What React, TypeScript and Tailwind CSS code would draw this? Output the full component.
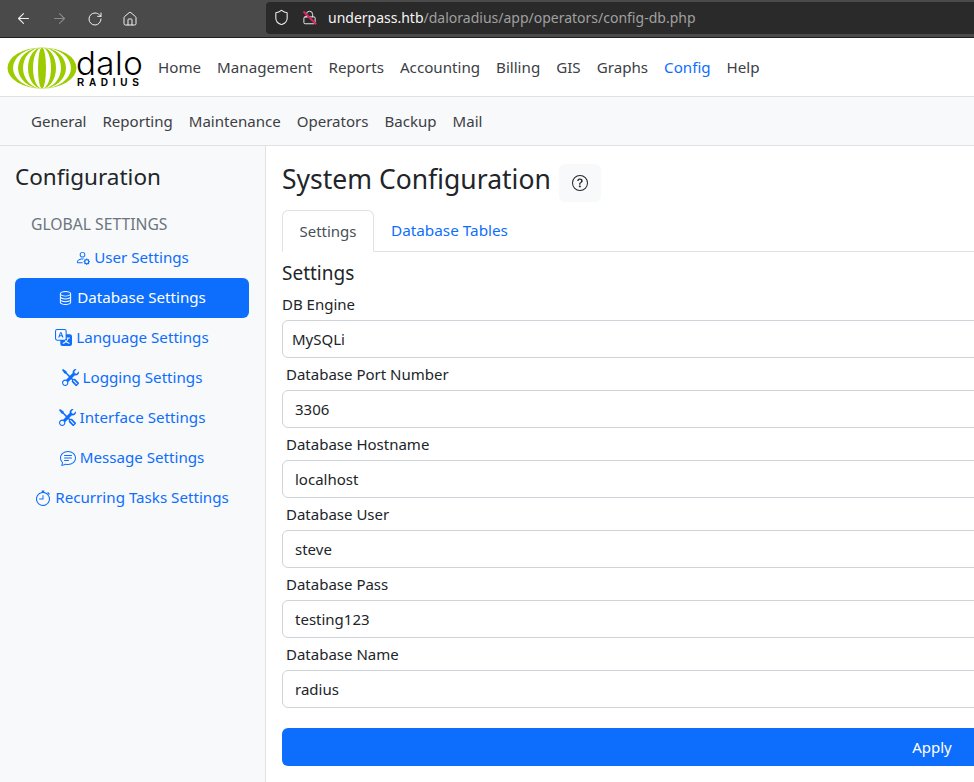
import React from 'react';
import { ArrowLeft, ArrowRight, RotateCw, House, Shield, Lock } from 'lucide-react';
import { BsPersonGear, BsDatabase, BsTranslate, BsTools, BsChatText, BsStopwatch, BsQuestionCircle } from 'react-icons/bs';

const navItems = ['Home', 'Management', 'Reports', 'Accounting', 'Billing', 'GIS', 'Graphs', 'Config', 'Help'];
const subItems = ['General', 'Reporting', 'Maintenance', 'Operators', 'Backup', 'Mail'];

const sideItems = [
  { label: 'User Settings', icon: BsPersonGear, size: 15 },
  { label: 'Database Settings', icon: BsDatabase, size: 15, active: true },
  { label: 'Language Settings', icon: BsTranslate, size: 17 },
  { label: 'Logging Settings', icon: BsTools, size: 17 },
  { label: 'Interface Settings', icon: BsTools, size: 17 },
  { label: 'Message Settings', icon: BsChatText, size: 16 },
  { label: 'Recurring Tasks Settings', icon: BsStopwatch, size: 16 },
];

const fields = [
  { label: 'Database Port Number', value: '3306' },
  { label: 'Database Hostname', value: 'localhost' },
  { label: 'Database User', value: 'steve' },
  { label: 'Database Pass', value: 'testing123' },
  { label: 'Database Name', value: 'radius' },
];

// white tapered meridians of the globe, given as inner and outer radius
const stripes = [
  [4, 9],
  [14, 19],
  [24, 29],
];

const Logo = () => (
  <div className="relative w-[136px] h-[44px] shrink-0">
    <svg width="70" height="42" viewBox="0 0 70 42" className="absolute left-0 top-[2px]">
      <ellipse cx="35" cy="21" rx="34.5" ry="20.5" fill="#9ccc00" />
      {stripes.map(([a, b]) => (
        <g key={a} fill="#ffffff">
          <path d={`M35 .5A${b} 20.5 0 0 1 35 41.5A${a} 20.5 0 0 0 35 .5Z`} />
          <path d={`M35 .5A${b} 20.5 0 0 0 35 41.5A${a} 20.5 0 0 1 35 .5Z`} />
        </g>
      ))}
    </svg>
    <span className="absolute left-[69px] top-[6px] text-[33px] leading-[24px] font-light tracking-[0.5px] text-black font-['Inter',sans-serif]">dalo</span>
    <span className="absolute left-[70px] top-[33px] text-[10px] leading-[10px] font-bold tracking-[4.7px] text-black font-['Liberation_Sans',sans-serif]">RADIUS</span>
  </div>
);

export default function App() {
  return (
    <div className="w-[974px] h-[782px] overflow-hidden flex flex-col bg-white text-[#212529] font-['Noto_Sans',sans-serif]">
      {/* Browser toolbar */}
      <div className="h-[38px] shrink-0 bg-[#4a4a4a] border-b border-[#1f1f1f] flex items-center pl-[15px]">
        <ArrowLeft size={17} strokeWidth={1.5} className="text-[#f0f0f0]" />
        <ArrowRight size={17} strokeWidth={1.5} className="text-[#8a8a8a] ml-[19px]" />
        <RotateCw size={16} strokeWidth={1.5} className="text-[#f0f0f0] ml-[19px]" />
        <House size={16} strokeWidth={1.5} className="text-[#f0f0f0] ml-[19px]" />
        <div className="ml-[128px] h-[32px] flex-1 bg-[#2a2a2a] rounded-l-[4px] flex items-center pl-[7px] mb-[2px]">
          <Shield size={17} strokeWidth={1.5} className="text-[#f0f0f0]" />
          <div className="relative ml-[12px] mr-[11px]">
            <Lock size={15} strokeWidth={1.5} className="text-[#f0f0f0]" />
            <div className="absolute left-[-1px] top-[7px] w-[18px] h-[1.5px] bg-[#e0245e] rotate-45" />
          </div>
          <span className="text-[14px] text-[#f5f5f5]">underpass.htb<span className="text-[#a0a0a0]">/daloradius/app/operators/config-db.php</span></span>
        </div>
      </div>

      {/* Main nav */}
      <nav className="h-[59px] shrink-0 bg-white border-b border-[#dee2e6] flex items-center pl-[7px]">
        <Logo />
        <div className="flex gap-[16px] ml-[15px] pt-[1px]">
          {navItems.map((item) => (
            <a key={item} className={`text-[15.15px] ${item === 'Config' ? 'text-[#0d6efd]' : 'text-[#3c4045]'}`}>{item}</a>
          ))}
        </div>
      </nav>

      {/* Sub nav */}
      <div className="h-[49px] shrink-0 bg-[#f8f9fa] border-b border-[#dee2e6] flex items-center gap-[16px] pl-[31px]">
        {subItems.map((item) => (
          <a key={item} className="text-[15.05px] text-[#3c4045]">{item}</a>
        ))}
      </div>

      <div className="flex flex-1 min-h-0">
        {/* Sidebar */}
        <aside className="w-[266px] shrink-0 bg-[#f8f9fa] border-r border-[#dee2e6] pl-[15px] pr-[16px] pt-[15px]">
          <h4 className="text-[22.5px] leading-[32px]">Configuration</h4>
          <div className="pl-[16px] mt-[19px] text-[15.7px] leading-[24px] text-[#6c757d]">GLOBAL SETTINGS</div>
          <ul className="mt-[2px]">
            {sideItems.map(({ label, icon: Icon, active, size }) => (
              <li key={label}>
                <a className={`h-[40px] pb-[1px] rounded-[6px] flex items-center justify-center gap-[4px] text-[15.15px] ${active ? 'bg-[#0d6efd] text-white' : 'text-[#0d6efd]'}`}>
                  <Icon size={size} />
                  {label}
                </a>
              </li>
            ))}
          </ul>
        </aside>

        {/* Content */}
        <main className="flex-1 min-w-0 pl-[16px] overflow-hidden">
          <div className="w-[1300px]">
            <div className="flex items-start mt-[16px]">
              <h1 className="text-[26.5px] leading-[34px]">System Configuration</h1>
              <div className="ml-[8px] mt-[2px] w-[42px] h-[38px] bg-[#f8f9fa] rounded-[6px] flex items-center justify-center">
                <BsQuestionCircle size={16} className="text-[#212529]" />
              </div>
            </div>
            <div className="flex border-b border-[#dee2e6] mt-[8px] h-[42px]">
              <div className="h-[42px] w-[92px] flex items-center justify-center border border-[#dee2e6] border-b-white rounded-t-[6px] bg-white text-[15px] text-[#495057]">Settings</div>
              <div className="h-[41px] px-[17px] flex items-center text-[15.3px] text-[#0d6efd]">Database Tables</div>
            </div>
            <h5 className="text-[19px] leading-[24px] mt-[9px]">Settings</h5>
            <label className="block text-[15px] leading-[22px] mt-[8px] mb-[5px]">DB Engine</label>
            <div className="h-[38px] border border-[#ced4da] rounded-[6px] flex items-center pl-[9px] text-[15px]">MySQLi</div>
            {fields.map((field) => (
              <div key={field.label}>
                <label className="block text-[15px] leading-[22px] pl-[4px] mt-[5px] mb-[5px]">{field.label}</label>
                <input readOnly value={field.value} className="block w-full h-[38px] border border-[#ced4da] rounded-[6px] pl-[12px] text-[15px] text-[#212529] outline-none" />
              </div>
            ))}
            <button className="mt-[20px] w-full h-[38px] rounded-[6px] bg-[#0d6efd] text-white text-[15px]">Apply</button>
          </div>
        </main>
      </div>
    </div>
  );
}
